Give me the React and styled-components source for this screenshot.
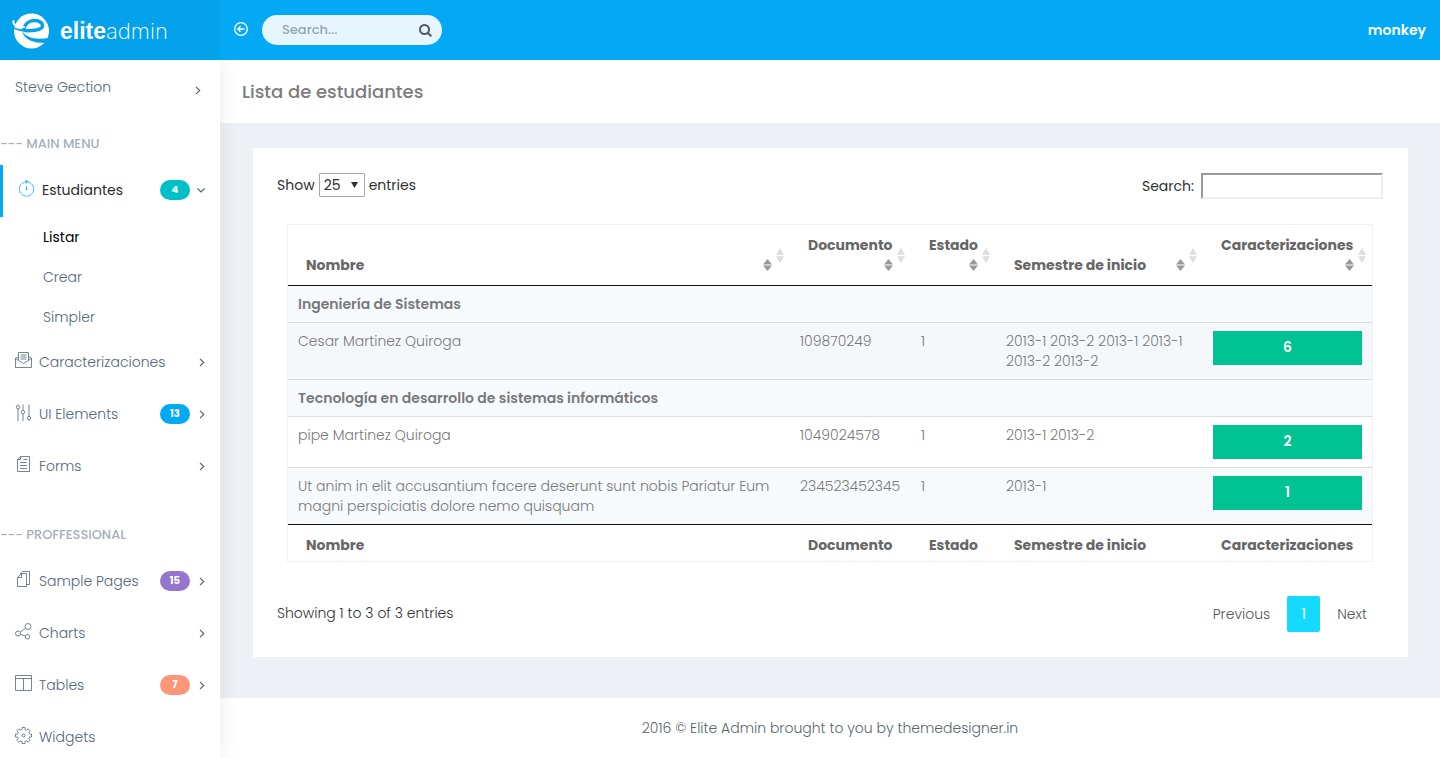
import React, { useState } from 'react';
import styled, { createGlobalStyle } from 'styled-components';

const GlobalStyle = createGlobalStyle`
  * {
    box-sizing: border-box;
  }

  body {
    margin: 0;
    background: #edf1f5;
    color: #313131;
    font-family: Poppins, Inter, sans-serif;
    font-size: 14px;
    font-weight: 300;
    line-height: 20px;
  }

  a {
    color: inherit;
    text-decoration: none;
  }
`;

const Page = styled.div`
  display: grid;
  grid-template-columns: 220px minmax(0, 1fr);
  grid-template-rows: 60px minmax(0, 1fr);
  height: 100vh;
  overflow: hidden;
`;

const Brand = styled.a`
  display: flex;
  align-items: center;
  gap: 11px;
  padding: 2px 0 0 12px;
  background: #04a2ea;
  color: white;
`;

const BrandText = styled.span`
  font-family: 'Liberation Sans', Arial, sans-serif;
  font-size: 23px;
  line-height: 30px;
  font-weight: 700;

  span {
    font-family: Inter, sans-serif;
    font-size: 22px;
    font-weight: 200;
  }
`;

const Navbar = styled.header`
  display: flex;
  align-items: center;
  gap: 14px;
  padding: 0 14px;
  background: #03a9f5;
  color: white;
`;

const IconButton = styled.button`
  display: flex;
  padding: 0;
  border: 0;
  background: none;
  color: ${(props) => props.$color || 'inherit'};
  cursor: pointer;
`;

const NavSearch = styled.form`
  display: flex;
  align-items: center;
  width: 180px;
  height: 30px;
  padding: 0 10px 0 20px;
  border-radius: 15px;
  background: #e6f6fe;

  input {
    flex: 1;
    min-width: 0;
    padding: 0;
    border: 0;
    outline: 0;
    background: none;
    font: inherit;
    font-size: 13px;
    font-weight: 500;
  }

  input::placeholder {
    color: #96a5b0;
    opacity: 1;
  }
`;

const UserName = styled.a`
  margin-left: auto;
  font-weight: 600;
`;

const Sidebar = styled.aside`
  position: relative;
  z-index: 1;
  background: white;
  box-shadow: 1px 0 20px rgba(0, 0, 0, 0.08);
  color: #54667a;
  clip-path: inset(0 -30px 0 0);
`;

const Profile = styled.a`
  display: flex;
  align-items: center;
  justify-content: space-between;
  height: 54px;
  padding: 0 18px 0 15px;

  svg {
    margin-top: 6px;
  }
`;

const MenuTitle = styled.h2`
  margin: 0;
  padding: ${(props) => props.$pad};
  color: #a6afbb;
  font-size: 13px;
  font-weight: 500;
  line-height: 20px;
`;

const Menu = styled.ul`
  margin: 0;
  padding: 0;
  list-style: none;
`;

const MenuLink = styled.a`
  display: flex;
  align-items: center;
  gap: 7px;
  height: 52px;
  padding: 0 14px 2px 15px;
  ${(props) =>
    props.$active &&
    `
    border-left: 3px solid #03a9f3;
    color: #2b2b2b;
    font-weight: 400;
  `}
`;

const MenuIcon = styled.svg`
  flex: none;
  width: 17px;
  height: 17px;
  margin-bottom: 4px;
  fill: none;
  stroke: ${(props) => (props.$active ? '#03a9f3' : '#54667a')};
  stroke-width: 0.8;
`;

const Badge = styled.span`
  width: 30px;
  border-radius: 10px;
  background: ${(props) => props.$color};
  color: white;
  font-size: 10px;
  font-weight: 700;
  text-align: center;
`;

const MenuEnd = styled.span`
  display: flex;
  align-items: center;
  gap: 7px;
  margin-left: auto;
`;

const SubLink = styled.a`
  display: block;
  padding: 10px 0 10px 43px;
  ${(props) => props.$active && 'color: #000; font-weight: 400;'}
`;

const Main = styled.main`
  display: flex;
  flex-direction: column;
  overflow: auto;
`;

const TitleBar = styled.div`
  padding: 22px 22px 21px;
  background: white;

  h1 {
    margin: 0;
    color: #7c7c7c;
    font-size: 18px;
    font-weight: 500;
    line-height: 20px;
  }
`;

const Card = styled.section`
  margin: 25px 32px 40px 33px;
  padding: 25px 25px 25px 24px;
  background: white;
`;

const Bar = styled.div`
  display: flex;
  align-items: flex-start;
  justify-content: space-between;
  font-weight: 400;
`;

const Length = styled.label`
  display: flex;
  align-items: center;
  gap: 4px;

  select {
    height: 24px;
    width: 46px;
    padding: 0 4px;
    appearance: none;
    border: 1px solid #a9a9a9;
    border-radius: 1px;
    background: none;
    color: inherit;
    font: inherit;
  }
`;

const SelectBox = styled.span`
  display: grid;
  align-items: center;

  > * {
    grid-area: 1 / 1;
  }

  svg {
    justify-self: end;
    margin-right: 7px;
    pointer-events: none;
  }
`;

const Filter = styled.label`
  display: flex;
  align-items: center;
  gap: 7px;

  input {
    width: 182px;
    height: 26px;
    padding: 2px;
    border: 2px solid;
    border-color: #999 #eee #eee #999;
    background: white;
    font: inherit;
  }
`;

const TableWrap = styled.div`
  padding: 25px 10px 34px;
`;

const Table = styled.table`
  width: 100%;
  table-layout: fixed;
  border: 1px solid #eef0f5;
  border-spacing: 0;
  color: #797979;

  th {
    color: #666;
    font-weight: 700;
    text-align: left;
    vertical-align: bottom;
    white-space: nowrap;
  }

  thead th {
    position: relative;
    padding: 10px 18px;
    border-bottom: 1px solid #111;
  }

  tfoot th {
    padding: 10px 18px 6px;
    border-top: 1px solid #111;
  }

  td {
    padding: 8px 10px;
    border-top: 1px solid #ddd;
    vertical-align: top;
  }

  tbody tr:first-child td {
    border-top: 0;
  }
`;

const Row = styled.tr`
  background: ${(props) => props.$color || 'white'};

  td {
    font-weight: ${(props) => (props.$group ? 600 : 300)};
  }
`;

const HeadCell = styled.div`
  display: flex;
  flex-wrap: wrap;
  align-items: center;

  svg {
    margin: 4px 0 4px auto;
  }
`;

const SortMark = styled.span`
  position: absolute;
  top: 23px;
  right: 6px;
  display: flex;
`;

const CountButton = styled.button`
  display: block;
  width: 100%;
  height: 34px;
  padding: 0 0 2px;
  border: 0;
  background: #00c292;
  color: white;
  font: inherit;
  font-weight: 600;
  cursor: pointer;
`;

const Pager = styled.nav`
  display: flex;
  gap: 1px;
  color: #555;
  font-weight: 300;
`;

const PageButton = styled.button`
  min-width: 33px;
  height: 36px;
  padding: 0 ${(props) => (props.$current ? '12px' : '16px')};
  border: 0;
  border-radius: 2px;
  background: ${(props) => (props.$current ? '#13dafe' : 'none')};
  color: ${(props) => (props.$current ? 'white' : 'inherit')};
  font: inherit;
  font-weight: ${(props) => (props.$current ? 400 : 300)};
  cursor: pointer;
`;

const Info = styled.div`
  padding: 7px 0;
  font-weight: 300;
`;

const Footer = styled.footer`
  margin-top: auto;
  padding: 20px;
  background: white;
  color: #58666e;
  text-align: center;
`;

const icons = {
  clock: (
    <>
      <circle cx='8.5' cy='9' r='7.2' strokeDasharray='5 0.65' />
      <path d='M8.5 0.5v3M7 1h3M8.5 6v4M7.5 9h2' />
    </>
  ),
  mail: (
    <path d='M3.5 5L.5 6v9.5h16V6l-3-1M3.5 8V.5h10V8M.5 6.5l8 5 8-5M5.5 3h6M5.5 5h6M5.5 7h6' />
  ),
  sliders: (
    <>
      <path d='M3 .5v1M3 5v12M8 .5v6M8 10v7M14 .5v11.5M14 16v1' />
      <circle cx='3' cy='3.2' r='1.7' />
      <circle cx='8' cy='8.2' r='1.7' />
      <circle cx='14' cy='14' r='1.7' />
    </>
  ),
  form: (
    <path d='M5.5 .5h9v15h-12v-12zM5.5 .5v3h-3M8.5 3.5h4M5 6.5h7M5 9.5h7M5 12.5h7' />
  ),
  pages: (
    <path d='M6.5 2.5h5v13h-9v-9zM6.5 2.5v4h-4M5.5 3.5v-1l2-2h7v13h-3' />
  ),
  share: (
    <>
      <circle cx='3' cy='10.5' r='2.5' />
      <circle cx='13' cy='3.5' r='3' />
      <circle cx='12.5' cy='13.8' r='2.2' />
      <path d='M5.3 9.3L10.4 5.2M5.4 11.2l5 1.9' />
    </>
  ),
  layout: <path d='M.5 .5h16v15H.5zM.5 3.5h16M8.5 3.5v12' />,
  gear: (
    <>
      <circle cx='8.5' cy='8.5' r='1.5' />
      <path d='M7 .5h3v2l1.6.7L13.2 1.8l2 2-1.4 1.6.7 1.6h2v3h-2l-.7 1.6 1.4 1.6-2 2-1.6-1.4-1.6.7v2H7v-2l-1.6-.7-1.6 1.4-2-2 1.4-1.6L2.5 10h-2V7h2l.7-1.6L1.8 3.8l2-2 1.6 1.4L7 2.5z' />
    </>
  ),
};

const Logo = () => (
  <svg width='37' height='36' viewBox='0 0 37 36' aria-hidden='true'>
    <circle cx='19.5' cy='18' r='17.5' fill='white' />
    {/* notch on the left edge, under the hook */}
    <path d='M0 13c5 4 13 4 21 3l-8 3C8 18 4 17 1 15.5z' fill='#04a2ea' />
    {/* bowl of the e */}
    <path
      d='M11.5 17C12.500 11 17 7.500 22.500 7.500C28 7.500 31 10.500 30.500 13.500C29.500 17 21 18 12 17.500'
      fill='none'
      stroke='#04a2ea'
      strokeWidth='3.500'
    />
    {/* tail, open to the right */}
    <path d='M10 18C14 25 24 27 36 25l-3 5C22 30 12 27 10 18z' fill='#04a2ea' />
    <path
      d='M1.5 8C.5 12 6 14 12 14'
      fill='none'
      stroke='white'
      strokeWidth='2'
      strokeLinecap='round'
    />
  </svg>
);

const Chevron = ({ down }) => (
  <svg
    width='9'
    height='9'
    viewBox='0 0 9 9'
    fill='none'
    stroke='#54667a'
    strokeWidth='1.2'
    aria-hidden='true'
  >
    <path d={down ? 'M.5 2.5L4 6 7.5 2.5' : 'M3 .8L6.7 4.5 3 8.2'} />
  </svg>
);

const SortIcon = ({ color, width, height }) => (
  <svg width={width} height={height} viewBox='0 0 9 14' fill={color} preserveAspectRatio='none' aria-hidden='true'>
    <path d='M4.5 0L9 6.3H0zM0 7.7h9L4.5 14z' />
  </svg>
);

const mainMenu = [
  { label: 'Estudiantes', icon: 'clock', badge: 4, color: '#00bfc7', active: true, children: ['Listar', 'Crear', 'Simpler'] },
  { label: 'Caracterizaciones', icon: 'mail' },
  { label: 'UI Elements', icon: 'sliders', badge: 13, color: '#03a9f3' },
  { label: 'Forms', icon: 'form' },
];

const proMenu = [
  { label: 'Sample Pages', icon: 'pages', badge: 15, color: '#9675ce' },
  { label: 'Charts', icon: 'share' },
  { label: 'Tables', icon: 'layout', badge: 7, color: '#fb9678' },
  { label: 'Widgets', icon: 'gear', leaf: true },
];

const columns = [
  { label: 'Nombre' },
  { label: 'Documento', width: 121 },
  { label: 'Estado', width: 85 },
  { label: 'Semestre de inicio', width: 207 },
  { label: 'Caracterizaciones', width: 169 },
];

const rows = [
  { group: 'Ingeniería de Sistemas', color: '#f7fafc' },
  {
    name: 'Cesar Martinez Quiroga',
    doc: '109870249',
    state: 1,
    terms: '2013-1 2013-2 2013-1 2013-1 2013-2 2013-2',
    count: 6,
    color: '#f5f8fb',
  },
  { group: 'Tecnología en desarrollo de sistemas informáticos', color: '#f7fafc' },
  { name: 'pipe Martinez Quiroga', doc: '1049024578', state: 1, terms: '2013-1 2013-2', count: 2 },
  {
    name: 'Ut anim in elit accusantium facere deserunt sunt nobis Pariatur Eum magni perspiciatis dolore nemo quisquam',
    doc: '234523452345',
    state: 1,
    terms: '2013-1',
    count: 1,
    color: '#f7fafc',
  },
];

const MenuList = ({ items }) => (
  <Menu>
    {items.map((item) => (
      <li key={item.label}>
        <MenuLink href='#' $active={item.active}>
          <MenuIcon viewBox='0 0 17 17' $active={item.active} aria-hidden='true'>
            {icons[item.icon]}
          </MenuIcon>
          {item.label}
          <MenuEnd>
            {item.badge ? <Badge $color={item.color}>{item.badge}</Badge> : null}
            {item.leaf ? null : <Chevron down={item.active} />}
          </MenuEnd>
        </MenuLink>
        {item.children ? (
          <Menu>
            {item.children.map((child, i) => (
              <li key={child}>
                <SubLink href='#' $active={i === 0}>
                  {child}
                </SubLink>
              </li>
            ))}
          </Menu>
        ) : null}
      </li>
    ))}
  </Menu>
);

const StudentsTable = () => (
  <Table>
    <colgroup>
      {columns.map((col) => (
        <col key={col.label} width={col.width} />
      ))}
    </colgroup>
    <thead>
      <tr>
        {columns.map((col) => (
          <th key={col.label} scope='col'>
            <HeadCell>
              {col.label}
              <SortIcon color='#999' width={9} height={12} />
            </HeadCell>
            <SortMark>
              <SortIcon color='#ddd' width={8} height={15} />
            </SortMark>
          </th>
        ))}
      </tr>
    </thead>
    <tbody>
      {rows.map((row) =>
        row.group ? (
          <Row key={row.group} $color={row.color} $group>
            <td colSpan={5}>{row.group}</td>
          </Row>
        ) : (
          <Row key={row.doc} $color={row.color}>
            <td>{row.name}</td>
            <td>{row.doc}</td>
            <td>{row.state}</td>
            <td>{row.terms}</td>
            <td>
              <CountButton type='button'>{row.count}</CountButton>
            </td>
          </Row>
        )
      )}
    </tbody>
    <tfoot>
      <tr>
        {columns.map((col) => (
          <th key={col.label}>{col.label}</th>
        ))}
      </tr>
    </tfoot>
  </Table>
);

export default function App() {
  const [length, setLength] = useState('25');
  const [search, setSearch] = useState('');

  return (
    <>
      <GlobalStyle />
      <Page>
        <Brand href='#'>
          <Logo />
          <BrandText>
            elite<span>admin</span>
          </BrandText>
        </Brand>
        <Navbar>
          <IconButton type='button' aria-label='Toggle menu'>
            <svg width='14' height='16' viewBox='0 0 14 16' fill='none' stroke='currentColor' strokeWidth='1.3'>
              <circle cx='7' cy='7' r='6.3' />
              <path d='M10.5 7H4M6.5 4.3L3.8 7l2.7 2.7' />
            </svg>
          </IconButton>
          <NavSearch>
            <input type='text' placeholder='Search...' aria-label='Search' />
            <IconButton type='button' aria-label='Search' $color='#4c5667'>
              <svg width='13' height='13' viewBox='0 0 13 13' fill='none' stroke='currentColor' strokeWidth='2'>
                <circle cx='5.5' cy='5.5' r='4.5' />
                <path d='M8.7 8.7l3.6 3.6' />
              </svg>
            </IconButton>
          </NavSearch>
          <UserName href='#'>monkey</UserName>
        </Navbar>
        <Sidebar>
          <Profile href='#'>
            Steve Gection
            <Chevron />
          </Profile>
          <MenuTitle $pad='20px 0 11px'>--- MAIN MENU</MenuTitle>
          <MenuList items={mainMenu} />
          <MenuTitle $pad='32px 0 11px'>--- PROFFESSIONAL</MenuTitle>
          <MenuList items={proMenu} />
        </Sidebar>
        <Main>
          <TitleBar>
            <h1>Lista de estudiantes</h1>
          </TitleBar>
          <Card>
            <Bar>
              <Length>
                Show
                <SelectBox>
                  <select value={length} onChange={(e) => setLength(e.target.value)}>
                    <option>10</option>
                    <option>25</option>
                    <option>50</option>
                  </select>
                  <svg width='7' height='6' viewBox='0 0 7 6' fill='#313131'>
                    <path d='M0 0h7L3.5 6z' />
                  </svg>
                </SelectBox>
                entries
              </Length>
              <Filter>
                Search:
                <input type='search' value={search} onChange={(e) => setSearch(e.target.value)} />
              </Filter>
            </Bar>
            <TableWrap>
              <StudentsTable />
            </TableWrap>
            <Bar>
              <Info>Showing 1 to 3 of 3 entries</Info>
              <Pager>
                <PageButton type='button'>Previous</PageButton>
                <PageButton type='button' $current>
                  1
                </PageButton>
                <PageButton type='button'>Next</PageButton>
              </Pager>
            </Bar>
          </Card>
          <Footer>2016 © Elite Admin brought to you by themedesigner.in</Footer>
        </Main>
      </Page>
    </>
  );
}
